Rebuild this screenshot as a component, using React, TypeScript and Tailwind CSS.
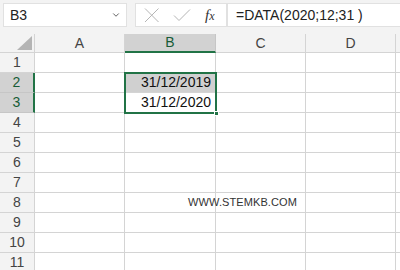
import { ChevronDown } from "lucide-react";

const cols = ["A", "B", "C", "D"];
const rows = [1, 2, 3, 4, 5, 6, 7, 8, 9, 10, 11];

const font = { fontFamily: '"Liberation Sans", Arial, sans-serif' };

const App = () => {
  return (
    <div className="w-[400px] h-[270px] overflow-hidden bg-[#f3f3f3] relative" style={font}>
      {/* formula bar */}
      <div className="flex items-stretch h-[34px] pt-[3px] pb-[7px] pl-[3px]">
        <div className="w-[124px] bg-white border border-[#e1e1e1] flex items-center justify-between pl-[6px] pr-[5px]">
          <span className="text-[14px] text-[#222]">B3</span>
          <ChevronDown size={10} strokeWidth={2} className="text-[#444]" />
        </div>
        <div className="w-[8px]" />
        <div className="w-[92px] bg-white border border-[#e1e1e1] flex items-center pl-[8px]">
          <svg width="16" height="16" viewBox="0 0 16 16" className="shrink-0">
            <path d="M1 1.5 L14.5 15 M14.5 1.5 L1 15" stroke="#b5b5b5" strokeWidth="1" fill="none" />
          </svg>
          <svg width="18" height="14" viewBox="0 0 18 14" className="ml-[13px] shrink-0">
            <path d="M1 7.5 L6 12.5 L17 1.5" stroke="#b5b5b5" strokeWidth="1" fill="none" />
          </svg>
          <span
            className="text-[15px] italic text-[#333] ml-[14px]"
            style={{ fontFamily: '"Liberation Serif", "Times New Roman", serif' }}
          >
            f<span className="text-[12px]">x</span>
          </span>
        </div>
        <div className="flex-1 bg-white border border-[#e1e1e1] border-r-0 flex items-center pl-[8px]">
          <span className="text-[14px] text-[#222]">=DATA(2020;12;31 )</span>
        </div>
      </div>

      {/* sheet grid */}
      <div className="grid grid-cols-[35px_90px_91px_90px_90px_1fr] grid-rows-[19px] auto-rows-[20px]">
        {/* header row */}
        <div className="bg-[#f3f3f3] border-r border-b border-[#d4d4d4] flex items-end justify-end pr-[2px] pb-[2px]">
          <svg width="15" height="14" viewBox="0 0 15 14">
            <polygon points="15,0 15,14 0,14" fill="#b4b4b4" />
          </svg>
        </div>
        {cols.map((c) =>
          c === "B" ? (
            <div
              key={c}
              className="bg-[#d2d2d2] border-r border-[#c6c6c6] border-b-2 border-b-[#217346] flex items-center justify-center text-[14px] text-[#185c37]"
            >
              {c}
            </div>
          ) : (
            <div
              key={c}
              className="bg-[#f3f3f3] border-r border-b border-[#d4d4d4] flex items-center justify-center text-[14px] text-[#444]"
            >
              {c}
            </div>
          )
        )}
        <div className="bg-[#f3f3f3] border-b border-[#d4d4d4]" />

        {rows.map((r) => {
          const sel = r === 2 || r === 3;
          return [
            <div
              key={`h${r}`}
              className={
                sel
                  ? "bg-[#d2d2d2] border-b border-[#c6c6c6] border-r-2 border-r-[#217346] flex items-center justify-center text-[14px] text-[#185c37]"
                  : "bg-[#f3f3f3] border-r border-b border-[#d4d4d4] flex items-center justify-center text-[14px] text-[#444]"
              }
            >
              {r}
            </div>,
            <div key={`a${r}`} className="bg-white border-r border-b border-[#d4d4d4]" />,
            <div
              key={`b${r}`}
              className={
                (r === 2 ? "bg-[#d0d0d0] " : "bg-white ") +
                "border-r border-b border-[#d4d4d4] flex items-center justify-end pr-[4px] text-[14px] text-[#111]"
              }
            >
              {r === 2 ? "31/12/2019" : r === 3 ? "31/12/2020" : ""}
            </div>,
            <div
              key={`c${r}`}
              className="bg-white border-r border-b border-[#d4d4d4] flex items-center justify-end pr-[8px] relative"
            >
              {r === 8 && (
                <span className="absolute right-[8px] whitespace-nowrap text-[11px] text-[#333] tracking-[0.1px]">
                  WWW.STEMKB.COM
                </span>
              )}
            </div>,
            <div key={`d${r}`} className="bg-white border-r border-b border-[#d4d4d4]" />,
            <div key={`e${r}`} className="bg-white border-b border-[#d4d4d4]" />,
          ];
        })}
      </div>

      {/* selection outline over B2:B3 */}
      <div className="absolute left-[124px] top-[72px] w-[93px] h-[42px] border-2 border-[#217346] pointer-events-none">
        <div className="absolute -right-[4px] -bottom-[4px] w-[5px] h-[5px] bg-[#217346] border border-white" />
      </div>
    </div>
  );
};

export default App;
